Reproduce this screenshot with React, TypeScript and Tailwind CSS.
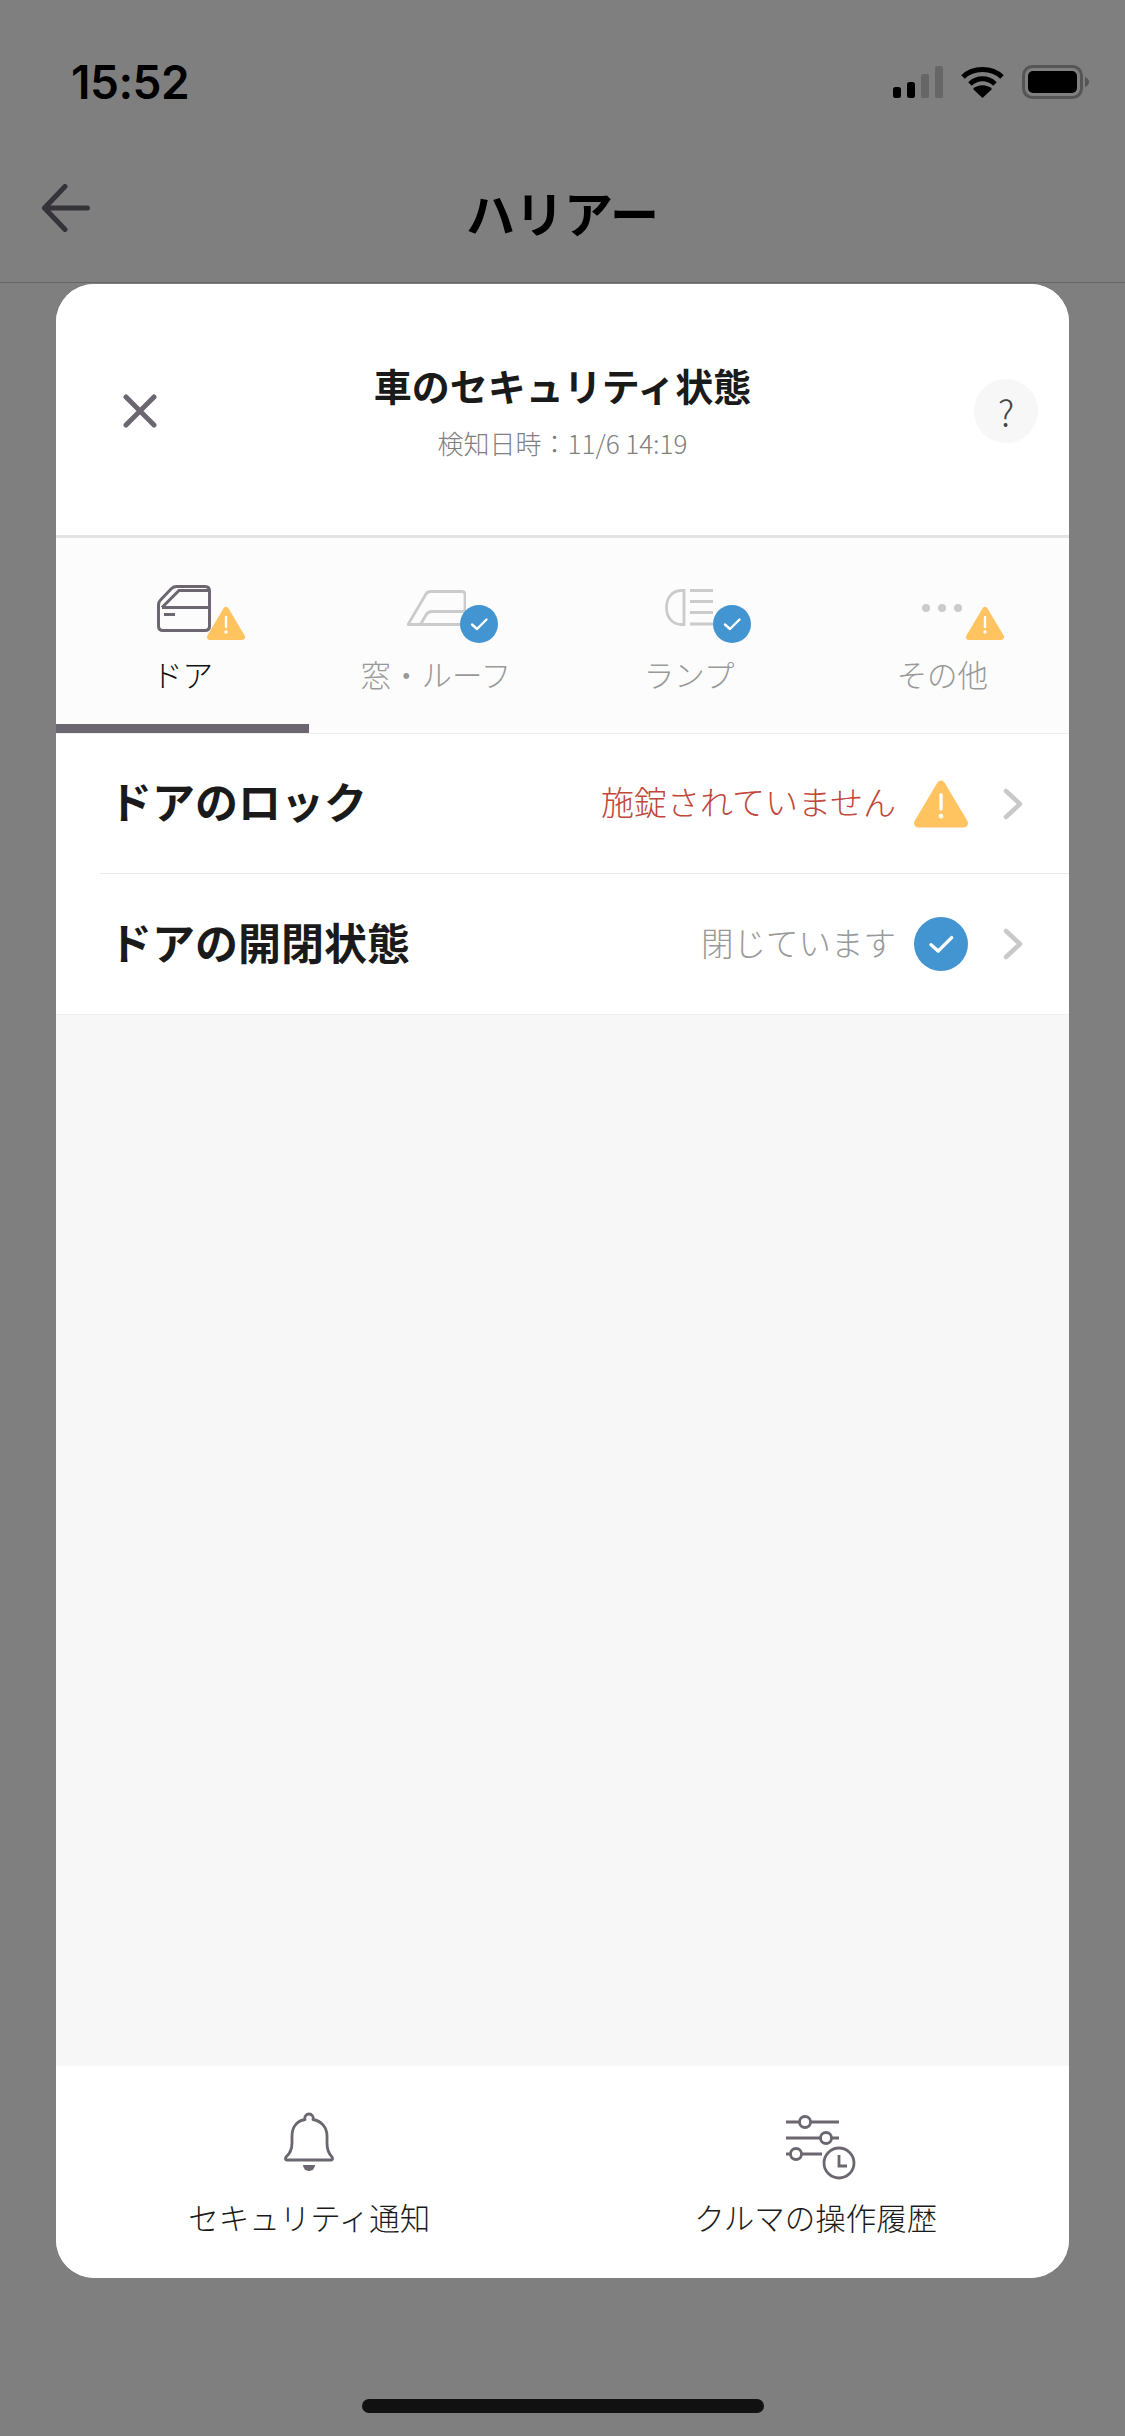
const FONT = "font-['Noto_Sans_CJK_JP','Noto_Sans',sans-serif]"

function WarnBadge({ className }: { className: string }) {
  return (
    <svg viewBox="0 0 38 35" className={className}>
      <path d="M19 4 L35 31 H3 Z" fill="#ffc35f" stroke="#ffc35f" strokeWidth="6" strokeLinejoin="round" />
      <path d="M19 11 V21" stroke="#fff" strokeWidth="2.4" strokeLinecap="round" />
      <circle cx="19" cy="26" r="1.7" fill="#fff" />
    </svg>
  )
}

function CheckBadge({ className }: { className: string }) {
  return (
    <svg viewBox="0 0 38 38" className={className}>
      <circle cx="19" cy="19" r="19" fill="#4295d0" />
      <path d="M12 19.5 L17 24 L26.5 14.5" fill="none" stroke="#fff" strokeWidth="2.4" strokeLinecap="round" strokeLinejoin="round" />
    </svg>
  )
}

function DoorIcon() {
  return (
    <svg viewBox="0 0 54 47" className="absolute left-[6px] top-0 w-[54px] h-[47px]" fill="none" stroke="#6b6670" strokeWidth="3">
      <path d="M1.5 20 Q1.5 17 3.5 15 L14.5 3.5 Q16.5 1.5 19.5 1.5 H48 Q52.5 1.5 52.5 6 V41 Q52.5 45.5 48 45.5 H6 Q1.5 45.5 1.5 41 Z" />
      <path d="M5 22.5 L22 5.5 H52 M5 22.5 H52" />
      <path d="M7 29.5 H18" />
    </svg>
  )
}

function WindowIcon() {
  return (
    <svg viewBox="0 0 59 36" className="absolute left-[3px] top-[5px] w-[59px] h-[36px]" fill="none" stroke="#cbcbcb" strokeWidth="2.8">
      <path d="M1 34.5 L19 4 Q20.5 1.5 24 1.5 H55 Q58 1.5 58 4.5 V34.5 Z" strokeLinejoin="round" />
      <path d="M13.5 34.5 L19 25 Q21 21.5 25 21.5 H58" />
    </svg>
  )
}

function LampIcon() {
  return (
    <svg viewBox="0 0 49 37" className="absolute left-[8px] top-[4px] w-[49px] h-[37px]" fill="none" stroke="#cbcbcb" strokeWidth="2.8">
      <path d="M19 1.5 H17 C7 1.5 1.5 9 1.5 18.5 C1.5 28 7 35.5 17 35.5 H19 Z" />
      <path d="M25 1.5 H48 M25 12.5 H48 M25 23.5 H48 M25 35 H48" />
    </svg>
  )
}

function DotsIcon() {
  return (
    <svg viewBox="0 0 40 8" className="absolute left-[12px] top-[19px] w-[40px] h-[8px]" fill="#cbcbcb">
      <circle cx="4" cy="4" r="4" />
      <circle cx="20" cy="4" r="4" />
      <circle cx="36" cy="4" r="4" />
    </svg>
  )
}

function BellIcon() {
  return (
    <svg viewBox="0 0 50 59" className="w-[50px] h-[59px]" fill="none" stroke="#6b6670" strokeWidth="2.8">
      <path d="M3.5 48 H46.5 Q49.5 48 48 45 Q43 40 43 31 V24 C43 15 37 9 29 7.5 A4.2 4.2 0 1 0 21 7.5 C13 9 8 15 8 24 V31 Q8 40 2 45 Q0.5 48 3.5 48 Z" strokeLinejoin="round" />
      <path d="M19 53 H31 A6 6 0 0 1 19 53 Z" fill="#6b6670" stroke="none" />
    </svg>
  )
}

function HistoryIcon() {
  return (
    <svg viewBox="0 0 70 68" className="w-[70px] h-[68px]" fill="none" stroke="#6b6670" strokeWidth="2.8">
      <path d="M0 10 H13.5 M24.5 10 H53 M0 26 H34.5 M45.5 26 H53 M0 42 H4.5 M15.5 42 H36" />
      <circle cx="19" cy="10" r="5.5" />
      <circle cx="40" cy="26" r="5.5" />
      <circle cx="10" cy="42" r="5.5" />
      <circle cx="53" cy="51" r="15" />
      <path d="M53 43 V54 H61" />
    </svg>
  )
}

function Chevron() {
  return (
    <svg viewBox="0 0 20 32" className="w-[20px] h-[32px]" fill="none" stroke="#c9c9c9" strokeWidth="4.5" strokeLinecap="round" strokeLinejoin="round">
      <path d="M3 3 L17 16 L3 29" />
    </svg>
  )
}

function StatusIcons() {
  return (
    <div className="flex items-center">
      <svg viewBox="0 0 50 32" className="w-[50px] h-[32px]">
        <rect x="0" y="21" width="8" height="11" rx="2.5" fill="#000" />
        <rect x="14" y="16" width="8" height="16" rx="2.5" fill="#000" />
        <rect x="28" y="8" width="8" height="24" rx="2.5" fill="#666" />
        <rect x="42" y="0" width="8" height="32" rx="2.5" fill="#666" />
      </svg>
      <svg viewBox="0 0 45 34" className="ml-[17px] w-[45px] h-[34px]" fill="none" stroke="#000" strokeWidth="5">
        <path d="M3 12 C13 2 32 2 42 12" />
        <path d="M10 19 C17 12 28 12 35 19" />
        <path d="M22.5 33 L13 24 C18 19 27 19 32 24 Z" fill="#000" stroke="none" />
      </svg>
      <svg viewBox="0 0 68 34" className="ml-[17px] w-[68px] h-[34px]">
        <rect x="1.5" y="1.5" width="58" height="31" rx="9" fill="none" stroke="#555" strokeWidth="3" />
        <rect x="6" y="6" width="49" height="22" rx="5" fill="#000" />
        <path d="M63 12 Q67 14 67 17 Q67 20 63 22 Z" fill="#555" />
      </svg>
    </div>
  )
}

const tabs = [
  { label: 'ドア', icon: <DoorIcon />, warn: true, active: true },
  { label: '窓・ルーフ', icon: <WindowIcon />, warn: false, active: false },
  { label: 'ランプ', icon: <LampIcon />, warn: false, active: false },
  { label: 'その他', icon: <DotsIcon />, warn: true, active: false },
]

const rows = [
  { title: 'ドアのロック', status: '施錠されていません', warn: true },
  { title: 'ドアの開閉状態', status: '閉じています', warn: false },
]

export default function App() {
  return (
    <div className={`${FONT} w-[1125px] h-[2436px] bg-[#7f7f7f] flex flex-col overflow-hidden`}>
      <div className="h-[282px] border-b border-b-[#666] box-content">
        <div className="flex items-center justify-between pt-[64px] pl-[71px] pr-[35px]">
          <span className="font-['Inter',sans-serif] text-[46px] leading-[36px] font-semibold text-black tracking-[-0.5px]">15:52</span>
          <StatusIcons />
        </div>
        <div className="relative mt-[84px] flex justify-center">
          <svg viewBox="0 0 48 48" className="absolute left-[42px] top-[0px] w-[48px] h-[48px]" fill="none" stroke="#35323a" strokeWidth="5" strokeLinecap="round" strokeLinejoin="round">
            <path d="M23 2.5 L2.5 24 L23 45.5 M2.5 24 H45.5" />
          </svg>
          <h1 className="mt-[-8px] text-[49px] leading-[72px] font-bold text-black">ハリアー</h1>
        </div>
      </div>

      <div className="mx-[56px] mt-[1px] h-[1994px] rounded-[38px] bg-[#f7f7f7] overflow-hidden flex flex-col">
        <div className="h-[251px] bg-white grid grid-cols-[140px_1fr_140px] items-center">
          <div className="pl-[67px] pt-[3px]">
            <svg viewBox="0 0 34 34" className="w-[34px] h-[34px]" fill="none" stroke="#6b6670" strokeWidth="5" strokeLinecap="round">
              <path d="M3 3 L31 31 M31 3 L3 31" />
            </svg>
          </div>
          <div className="flex flex-col items-center">
            <h2 className="text-[38px] leading-[54px] font-bold text-[#1a1a1a] whitespace-nowrap">車のセキュリティ状態</h2>
            <p className="mt-[12px] text-[26px] leading-[38px] font-light text-[#808080] whitespace-nowrap">検知日時：11/6 14:19</p>
          </div>
          <div className="flex justify-end pr-[31px] pt-[3px]">
            <div className="w-[64px] h-[64px] rounded-full bg-[#f7f7f7] flex items-center justify-center text-[36px] font-light text-[#444]">?</div>
          </div>
        </div>

        <div className="flex h-[199px] bg-[#fcfcfc] border-t-[3px] border-t-[#e3e3e3] border-b border-b-[#eeeeee]">
          {tabs.map((tab) => (
            <div
              key={tab.label}
              className={`flex-1 flex flex-col items-center pt-[47px] border-b-[9px] ${tab.active ? 'border-b-[#6b6670]' : 'border-b-transparent'}`}
            >
              <div className="relative w-[64px] h-[58px]">
                {tab.icon}
                {tab.warn ? (
                  <WarnBadge className="absolute left-[56px] top-[21px] w-[38px] h-[35px]" />
                ) : (
                  <CheckBadge className="absolute left-[56px] top-[20px] w-[38px] h-[38px]" />
                )}
              </div>
              <span className={`mt-[11px] text-[30.5px] leading-[40px] font-light whitespace-nowrap ${tab.active ? 'text-[#111]' : 'text-[#999]'}`}>{tab.label}</span>
            </div>
          ))}
        </div>

        <div className="bg-white border-b border-b-[#eeeeee]">
          {rows.map((row, i) => (
            <div key={row.title} className={`ml-[44px] h-[140px] flex items-center pl-[9px] pr-[46px] ${i === 0 ? 'border-b border-b-[#e8e8e8]' : ''}`}>
              <span className="mb-[6px] text-[43px] font-bold text-[#1a1a1a] whitespace-nowrap">{row.title}</span>
              <span className={`ml-auto mb-[3px] font-light whitespace-nowrap ${row.warn ? 'text-[33px] text-[#c0473a]' : 'text-[32.5px] text-[#999]'}`}>{row.status}</span>
              <div className="ml-[18px] w-[54px] flex justify-center">
                {row.warn ? <WarnBadge className="w-[54px] h-[50px]" /> : <CheckBadge className="w-[54px] h-[54px]" />}
              </div>
              <div className="ml-[35px]">
                <Chevron />
              </div>
            </div>
          ))}
        </div>

        <div className="flex-1" />

        <div className="h-[212px] bg-white grid grid-cols-2">
          <div className="flex flex-col items-center pt-[46px]">
            <BellIcon />
            <span className="mt-[26px] text-[30.5px] leading-[40px] font-light text-[#1a1a1a] whitespace-nowrap">セキュリティ通知</span>
          </div>
          <div className="flex flex-col items-center pt-[46px]">
            <div className="pl-[10px]">
              <HistoryIcon />
            </div>
            <span className="mt-[17px] text-[30.5px] leading-[40px] font-light text-[#1a1a1a] whitespace-nowrap">クルマの操作履歴</span>
          </div>
        </div>
      </div>

      <div className="flex justify-center pt-[121px]">
        <div className="w-[402px] h-[14px] rounded-full bg-[#111]" />
      </div>
    </div>
  )
}
